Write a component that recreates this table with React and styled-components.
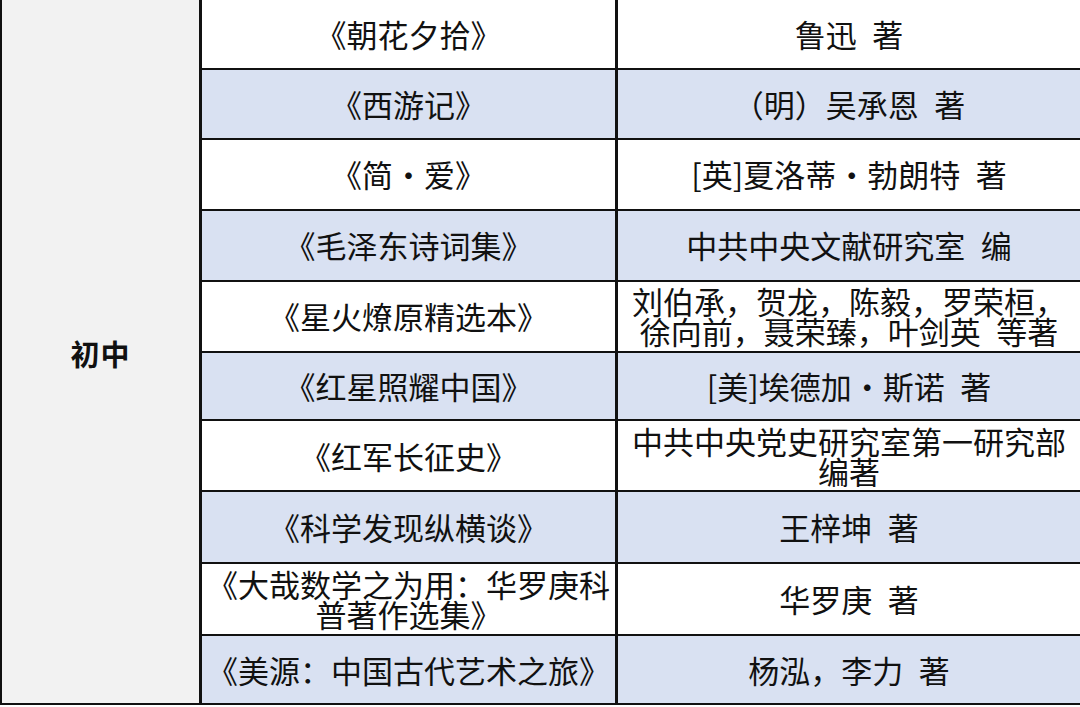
import React from "react";
import styled, { createGlobalStyle } from "styled-components";

const GlobalStyle = createGlobalStyle`
  html, body {
    margin: 0;
    padding: 0;
    background: #ffffff;
  }
  body {
    font-family: "Noto Sans CJK SC", "Noto Sans", sans-serif;
    color: #111111;
  }
`;

const Page = styled.div`
  width: 1080px;
  height: 707px;
  overflow: hidden;
  background: #ffffff;
`;

const Table = styled.div`
  display: flex;
  width: 1080px;
  height: 705px;
  box-sizing: border-box;
  border-left: 2px solid #111;
  border-bottom: 2px solid #111;
`;

const GroupCell = styled.div`
  width: 200px;
  flex: none;
  box-sizing: border-box;
  background: #f2f2f2;
  border-right: 3px solid #111;
  display: flex;
  align-items: center;
  justify-content: center;
  font-size: 29px;
  font-weight: 700;
  letter-spacing: 1px;
  padding-top: 2px;
`;

const Rows = styled.div`
  flex: 1;
  display: flex;
  flex-direction: column;
`;

const Row = styled.div`
  display: grid;
  grid-template-columns: 416px 1fr;
  height: ${(p) => p.$h}px;
  box-sizing: border-box;
  background: ${(p) => (p.$alt ? "#d9e1f2" : "#ffffff")};
  border-bottom: ${(p) => (p.$last ? "none" : "2px solid #111")};
`;

const Cell = styled.div`
  display: flex;
  flex-direction: column;
  align-items: center;
  justify-content: center;
  text-align: center;
  font-size: 31px;
  line-height: 30px;
  white-space: nowrap;
  box-sizing: border-box;
  &:first-child {
    border-right: 3px solid #111;
  }
`;

const Line = styled.span`
  display: block;
`;

// en space between name and role, full-width middle dot in names
const S = "\u2002";
const D = "\u30fb";

const books = [
  { title: "《朝花夕拾》", author: `鲁迅${S}著`, h: 70 },
  { title: "《西游记》", author: `（明）吴承恩${S}著`, h: 70 },
  { title: `《简${D}爱》`, author: `[英]夏洛蒂${D}勃朗特${S}著`, h: 71 },
  { title: "《毛泽东诗词集》", author: `中共中央文献研究室${S}编`, h: 71 },
  {
    title: "《星火燎原精选本》",
    author: ["刘伯承，贺龙，陈毅，罗荣桓，", `徐向前，聂荣臻，叶剑英${S}等著`],
    h: 71,
  },
  { title: "《红星照耀中国》", author: `[美]埃德加${D}斯诺${S}著`, h: 69 },
  {
    title: "《红军长征史》",
    author: ["中共中央党史研究室第一研究部", "编著"],
    h: 71,
  },
  { title: "《科学发现纵横谈》", author: `王梓坤${S}著`, h: 72 },
  {
    title: ["《大哉数学之为用：华罗庚科", "普著作选集》"],
    author: `华罗庚${S}著`,
    h: 72,
  },
  { title: "《美源：中国古代艺术之旅》", author: `杨泓，李力${S}著`, h: 67 },
];

const Lines = ({ text }) =>
  (Array.isArray(text) ? text : [text]).map((t, i) => <Line key={i}>{t}</Line>);

export default function App() {
  return (
    <Page>
      <GlobalStyle />
      <Table>
        <GroupCell>初中</GroupCell>
        <Rows>
          {books.map((b, i) => (
            <Row key={i} $h={b.h} $alt={i % 2 === 1} $last={i === books.length - 1}>
              <Cell>
                <Lines text={b.title} />
              </Cell>
              <Cell>
                <Lines text={b.author} />
              </Cell>
            </Row>
          ))}
        </Rows>
      </Table>
    </Page>
  );
}
